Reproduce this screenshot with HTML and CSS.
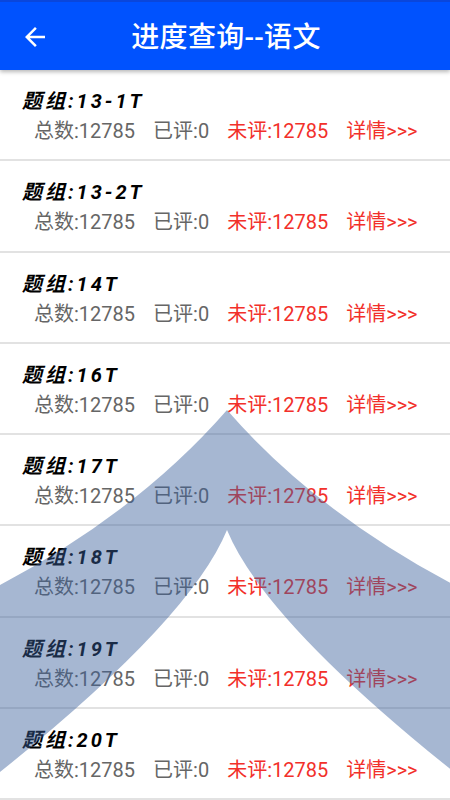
FILE: index.html
```html
<!DOCTYPE html>
<html lang="zh">
<head>
<meta charset="utf-8">
<link rel="stylesheet" href="styles.css">
</head>
<body>
<div class="screen">
  <header class="appbar">
    <svg class="back" viewBox="0 0 24 24" width="30" height="30"><path d="M20 11H7.83l5.59-5.59L12 4l-8 8 8 8 1.41-1.41L7.83 13H20v-2z" fill="#fff"/></svg>
    <h1 class="title">进度查询--语文</h1>
  </header>
  <ul class="list">
    <li class="row"><div class="name">题组:13-1T</div><div class="stats"><span class="stat">总数:12785</span><span class="stat">已评:0</span><span class="stat red">未评:12785</span><span class="stat red">详情&gt;&gt;&gt;</span></div></li>
    <li class="row"><div class="name">题组:13-2T</div><div class="stats"><span class="stat">总数:12785</span><span class="stat">已评:0</span><span class="stat red">未评:12785</span><span class="stat red">详情&gt;&gt;&gt;</span></div></li>
    <li class="row"><div class="name">题组:14T</div><div class="stats"><span class="stat">总数:12785</span><span class="stat">已评:0</span><span class="stat red">未评:12785</span><span class="stat red">详情&gt;&gt;&gt;</span></div></li>
    <li class="row"><div class="name">题组:16T</div><div class="stats"><span class="stat">总数:12785</span><span class="stat">已评:0</span><span class="stat red">未评:12785</span><span class="stat red">详情&gt;&gt;&gt;</span></div></li>
    <li class="row"><div class="name">题组:17T</div><div class="stats"><span class="stat">总数:12785</span><span class="stat">已评:0</span><span class="stat red">未评:12785</span><span class="stat red">详情&gt;&gt;&gt;</span></div></li>
    <li class="row"><div class="name">题组:18T</div><div class="stats"><span class="stat">总数:12785</span><span class="stat">已评:0</span><span class="stat red">未评:12785</span><span class="stat red">详情&gt;&gt;&gt;</span></div></li>
    <li class="row"><div class="name">题组:19T</div><div class="stats"><span class="stat">总数:12785</span><span class="stat">已评:0</span><span class="stat red">未评:12785</span><span class="stat red">详情&gt;&gt;&gt;</span></div></li>
    <li class="row"><div class="name">题组:20T</div><div class="stats"><span class="stat">总数:12785</span><span class="stat">已评:0</span><span class="stat red">未评:12785</span><span class="stat red">详情&gt;&gt;&gt;</span></div></li>
  </ul>
  <svg class="watermark" viewBox="0 0 450 800" width="450" height="800">
    <path d="M227 410 Q316 512 454 585 L454 772 Q264 620 227 530 Q190 620 0 772 L0 585 Q138 512 227 410 Z" fill="rgba(57,95,155,0.45)"/>
  </svg>
</div>
</body>
</html>
```
FILE: styles.css
```css
html, body {
  margin: 0;
  padding: 0;
  background: #fff;
}
.screen {
  position: relative;
  width: 450px;
  height: 800px;
  overflow: hidden;
  font-family: Roboto, "Noto Sans CJK SC", sans-serif;
}
.appbar {
  position: relative;
  z-index: 2;
  height: 68px;
  border-top: 2px solid #0a46db;
  background: #0052fe;
  box-shadow: 0 2px 4px rgba(0, 0, 0, 0.28);
  display: flex;
  align-items: center;
  justify-content: center;
}
.back {
  position: absolute;
  left: 20px;
  top: 20px;
}
.title {
  margin: 0;
  color: #fff;
  font-size: 28px;
  font-weight: 500;
  letter-spacing: 0.3px;
  font-family: Roboto, "Noto Sans CJK SC", sans-serif;
  padding-bottom: 2px;
  padding-left: 2px;
}
.list {
  list-style: none;
  margin: 0;
  padding: 0;
}
.row {
  padding: 16px 0 13.3px;
  border-bottom: 2px solid #e2e2e2;
}
.name {
  height: 30px;
  line-height: 30px;
  padding-left: 22px;
  font-size: 20px;
  font-weight: bold;
  font-style: italic;
  letter-spacing: 3px;
  color: #000;
}
.stats {
  height: 30px;
  line-height: 30px;
  padding-left: 34px;
  display: flex;
  gap: 18px;
  font-size: 20px;
  color: #666;
}
.red {
  color: #f2302a;
}
.watermark {
  position: absolute;
  left: 0;
  top: 0;
  pointer-events: none;
  z-index: 3;
}
```
